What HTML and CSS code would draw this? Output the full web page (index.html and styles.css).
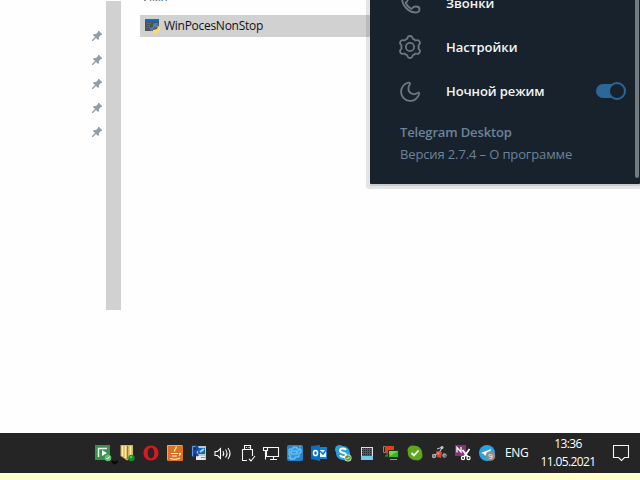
FILE: index.html
```html
<!DOCTYPE html>
<html lang="ru">
<head>
<meta charset="utf-8">
<title>Desktop</title>
<link rel="stylesheet" href="styles.css">
</head>
<body>
<svg width="0" height="0" class="defs"><defs>
<symbol id="pin" viewBox="0 0 12 12"><path d="M7 1h1l3 3v1H10L8 7v2L7 10 5 8 2 11H1v-1l3-3-2-2 1-1h2l2-2z" fill="#929ea8"/></symbol>
<path id="tooth" d="M8.300 5.200Q10.300 5.700 10.600 3.700Q10.900 2 13 2Q15.100 2 15.400 3.700Q15.700 5.700 17.700 5.200"/>
</defs></svg>
<main class="desktop">
  <nav class="pins">
    <svg><use href="#pin"/></svg><svg><use href="#pin"/></svg><svg><use href="#pin"/></svg><svg><use href="#pin"/></svg><svg><use href="#pin"/></svg>
  </nav>
  <div class="scrollbar"></div>
  <section class="files">
    <div class="column-head"><span>Имя</span></div>
    <div class="file">
      <svg width="16" height="16" viewBox="0 0 16 16"><path fill="#505456" d="M0 0h14v12H0z"/><path fill="#0873c4" d="M0 0h14v2H0z"/><path d="M2 4.500h4M2 6.500h3M2 8.500h3" stroke="#438049"/><path d="M8 5l2-1h3v4l-4 1-2 3-2-1V9l3-1z" fill="#4381b7"/><path d="M13 7l2 1v4l-3 1-1 2-3-1v-3l4-1z" fill="#ffdc51"/></svg>
      <span>WinPocesNonStop</span>
    </div>
  </section>
  <aside class="menu">
    <div class="item calls"><svg width="26" height="26" viewBox="0 0 26 26"><path d="M5 8C5 16 12 22.500 19 22.500c2.500 0 3.500-1.500 3.500-3.500 0-1.800-2-2.500-3.500-2.500s-3 .3-3.500 1.500c-.3.800-.8 1-1.500.600-2-1.100-4-3.100-5-5.100-.4-.8-.2-1.300.5-1.600C11 11 11 9 10.500 7S9.500 4 8 4 5 5.500 5 8z"/></svg><span>Звонки</span></div>
    <div class="item"><svg width="26" height="26" viewBox="0 0 26 26"><use href="#tooth"/><use href="#tooth" transform="rotate(60 13 13)"/><use href="#tooth" transform="rotate(120 13 13)"/><use href="#tooth" transform="rotate(180 13 13)"/><use href="#tooth" transform="rotate(240 13 13)"/><use href="#tooth" transform="rotate(300 13 13)"/><circle cx="13" cy="13" r="4.100"/></svg><span>Настройки</span></div>
    <div class="item"><svg width="26" height="26" viewBox="0 0 26 26"><path d="M11.500 4.700a9.200 9.200 0 1 0 10.700 11.200c.2-1.300-.8-1.700-1.700-1-4.700 3-9.600-.2-9-5.400.2-1.600.8-2.300 1.300-3 .7-1 .1-2-1.300-1.800z"/></svg><span class="night">Ночной режим</span><i class="toggle"></i></div>
    <footer><strong>Telegram Desktop</strong><span>Версия 2.7.4 – О программе</span></footer>
    <i class="menu-scroll"></i>
  </aside>
</main>
<div class="taskbar">
  <div class="tray">
    <svg viewBox="0 0 24 24"><path fill="#37914f" d="M4 4h15v15H4z"/><path d="M7.500 16V7.500H16" stroke="#e9f5ea" stroke-width="1.500" fill="none"/><path d="M11 9l5 3-5 3z" fill="#fff"/><circle cx="17" cy="17" r="3.300" fill="#69bd71"/><path d="M15.500 17l1 1 2-2.500" stroke="#fff" fill="none"/><path d="M21 20l2.500 2.500L26.500 20" stroke="#070707" stroke-width="2" fill="none"/></svg>
    <svg viewBox="0 0 24 24"><path fill="#d9b25c" d="M5.500 4H18v11l-6 4.500L5.500 15z"/><path d="M7.500 5v10M10.500 5v12M15.500 5v9" stroke="#fff0ab" stroke-width="1.500"/><path d="M12.500 5v13" stroke="#9b7838"/><circle cx="16.500" cy="17" r="3.200" fill="#158e28"/><circle cx="16" cy="16" r="1.200" fill="#4ad159"/></svg>
    <svg viewBox="0 0 24 24"><path fill-rule="evenodd" fill="#dc1721" d="M12 4.500c4.200 0 7.500 3.200 7.500 7.500s-3.300 7.500-7.500 7.500S4.500 16.300 4.500 12 7.800 4.500 12 4.500zm0 2c-2 0-3.300 2.300-3.300 5.500s1.300 5.500 3.300 5.500 3.300-2.300 3.300-5.500S14 6.500 12 6.500z"/></svg>
    <svg viewBox="0 0 24 24"><rect x="4" y="4" width="16" height="16" rx="1" fill="#de711f"/><path d="M4.500 19V4.500H19" stroke="#f6a15c" fill="none"/><path d="M13 5.500c1.500 2-3 3-1 5M8 12.500h7M9 15h5M7 17.500c3 1 7 1 10-.5M16 12.500c2-1 2 1 0 2" stroke="#fff4dd" fill="none" stroke-width="1.200"/></svg>
    <svg viewBox="0 0 24 24"><path fill="#bfc7ca" d="M9 5h10v14H9z"/><path fill="#1769b5" d="M11 7h7v6h-7z"/><path d="M13 11l4-3" stroke="#91d8f5" stroke-width="2"/><path fill="#e8eced" d="M9 15h9v4H9z"/><path d="M6 16V5.500h3q3 1 0 4.500H7l4 5" fill="none" stroke="#1d43ad" stroke-width="2.500"/><path d="M5.500 15V5.500h3" fill="none" stroke="#5c9de2"/><path d="M14 16.500h4" stroke="#83939c"/></svg>
    <svg viewBox="0 0 24 24" class="line"><path d="M4 10.500h2.500l3-3v10l-3-3H4zM12 10q1.500 2.500 0 5M14.500 8.500q3 4 0 8M17 7q4 5.500 0 11"/></svg>
    <svg viewBox="0 0 24 24" class="line"><path d="M9.500 8V4.500h6V8M8.500 19.500h-1v-11h10V15M8.500 19.500H12M11.500 6v1M14 6v1M14 18l2 2 4-5"/></svg>
    <svg viewBox="0 0 24 24" class="line"><path d="M9 6.500h10.500v9H7.500V10M14.500 15.500v3M11 18.500h7M4.500 6.500h4v3h-4zM6.500 9.500v9"/></svg>
    <svg viewBox="0 0 24 24"><rect x="4" y="4" width="16" height="16" rx="2" fill="#2484cb"/><path d="M6 8h4V6h4v2h4v4h-2v4h-4v2H7v-4H6zM8 10h6v3H8zM14 11l4-3" stroke="#7fcdf4" fill="#2f9bdb"/><path d="M5 17q3-2 5 2M16 6l2-1" stroke="#a9b59b" fill="none"/></svg>
    <svg viewBox="0 0 24 24"><path fill="#1683d2" d="M11 6h9v12h-9z"/><path fill="#eef7ff" d="M13 9h6v7h-6z"/><path d="M13 10l3 3 3-4" stroke="#0873c4" stroke-width="1.500" fill="none"/><path fill="#0670c5" d="M4 5l9-1v16l-9-2z"/><ellipse cx="8.500" cy="12" rx="2" ry="2.600" stroke="#fff" stroke-width="1.500" fill="none"/></svg>
    <svg viewBox="0 0 24 24"><circle cx="8.500" cy="8.500" r="4.500" fill="#23a2df"/><circle cx="15" cy="15" r="4.500" fill="#23a2df"/><circle cx="12" cy="12" r="7" fill="#23a2df"/><path d="M15 9c-1-2-6-2-6 .5 0 3 6 1.500 6 4.500 0 2.500-5 2.500-6 .2" fill="none" stroke="#fff" stroke-width="2"/><circle cx="17" cy="17" r="3.500" fill="#e9f4df"/><circle cx="17" cy="17" r="2.800" fill="#579b2d"/><path d="M15.500 17l1 1 2-2" stroke="#fff" fill="none"/></svg>
    <svg viewBox="0 0 24 24"><path fill="#dce2e4" d="M6 6h12v13H6z"/><path fill="#535b60" d="M7 7h10v8H7z"/><path d="M7 7.500h10M7 9.500h10M7 11.500h10M7 13.500h10" stroke="#1d2328" stroke-dasharray="1 1"/><path fill="#76c8ef" d="M6 15h12v4H6z"/></svg>
    <svg viewBox="0 0 24 24"><path fill="#222" stroke="#888" d="M4.500 5.500h7v6h-7z"/><path fill="#e43e1c" d="M6 5h9v7H6z"/><path d="M6 15h5M8 12v3" stroke="#777"/><path fill="#34b72b" stroke="#153d18" d="M9.500 9.500h10v7h-10z"/><path d="M10 10h9l-8 5z" fill="#75d946"/><path d="M11 18.500h7" stroke="#999"/></svg>
    <svg viewBox="0 0 24 24"><circle cx="9.500" cy="9.500" r="5" fill="#5fa61d"/><circle cx="14.500" cy="14.500" r="5" fill="#5fa61d"/><circle cx="12" cy="12" r="7.200" fill="#5fa61d"/><path d="M8.500 12l2.500 2.500 4.500-5" fill="none" stroke="#fff" stroke-width="1.800"/></svg>
    <svg viewBox="0 0 24 24"><path d="M10 8l6-2M12 12l3-5M7 15l4-3M16 13l3 2" stroke="#b9bdbd" stroke-width="1.200"/><circle cx="15" cy="6.500" r="1.500" fill="#c4c7c7"/><circle cx="7" cy="15" r="2.200" fill="#aeb2b2"/><circle cx="17.500" cy="14.500" r="2.200" fill="#999e9e"/><path d="M9 10l6 1-1 6-4-1z" fill="#d84736"/><path d="M10 11l3 1-2 2z" fill="#ff8e7b"/><path d="M6 15h2M17 15h2" stroke="#444"/></svg>
    <svg viewBox="0 0 24 24"><path fill="#81347d" d="M4 4h11v11H4z"/><path d="M6 11.500V6.500l4 4.500V6" fill="none" stroke="#fff" stroke-width="1.300"/><path d="M11.500 9l5.500 7M18.500 8l-5.500 8" stroke="#fff" stroke-width="1.800"/><g fill="none" stroke="#fff" stroke-width="1.200"><circle cx="12" cy="17" r="1.600"/><circle cx="17.500" cy="17" r="1.600"/></g></svg>
    <svg viewBox="0 0 24 24"><circle cx="12" cy="12" r="8" fill="#2ba3df"/><path fill="#fff" d="M6 12l10-4-2 7-3-1-1 1-1-2z"/><circle cx="15.500" cy="15" r="4.800" fill="#8c8c8c"/><text x="13.300" y="18" font-size="8" fill="#fff">9</text></svg>
  </div>
  <span class="lang">ENG</span>
  <div class="clock"><span>13:36</span><span>11.05.2021</span></div>
  <svg class="notice line" width="20" height="20" viewBox="0 0 20 20"><path d="M3.500 2.500h15v12h-4l-3 3-3-3h-5z"/></svg>
</div>
</body>
</html>
```
FILE: styles.css
```css
*, *::before, *::after { box-sizing: border-box; }
body { margin: 0; width: 640px; height: 480px; overflow: hidden; background: #ffffcc; font: 12px/16px "Open Sans", "Noto Sans", sans-serif; }
.defs { position: absolute; }
.desktop { display: flex; align-items: flex-start; height: 433px; background: #fefefe; }
.pins { width: 106px; padding: 30px 3px 0 0; display: flex; flex-direction: column; align-items: flex-end; gap: 12px; }
.pins svg { width: 12px; height: 12px; }
.scrollbar { width: 15px; height: 309px; margin-top: 1px; background: #d1d1d1; }
.files { width: 249px; padding-left: 19px; }
.column-head { display: flow-root; height: 15px; padding-left: 3px; color: #4c607a; }
.column-head span { display: block; margin-top: -12px; }
.file { display: flex; height: 22px; padding-left: 5px; align-items: center; gap: 3px; background: #d1d1d1; color: #111; }
.file svg { margin-top: 2px; }
.file span { letter-spacing: -.28px; }
.menu { position: relative; width: 270px; height: 184px; background: #18222d; color: #f3f5f6; border-radius: 0 0 1px 1px; box-shadow: 0 2px 0 0 rgba(0,0,0,.1), 0 1px 0 4px rgba(0,0,0,.1); }
.item { display: flex; align-items: center; height: 44px; padding-left: 27px; gap: 23px; font-weight: 600; font-size: 13px; white-space: nowrap; }
.item.calls { margin-top: -19px; }
.item svg { flex: none; fill: none; stroke: #6c7883; stroke-width: 1.8; stroke-linejoin: round; }
.night { width: 127px; letter-spacing: -.1px; }
.toggle { width: 30px; height: 18px; border-radius: 9px; display: flex; align-items: center; justify-content: flex-end; }
.toggle::before { content: ""; flex: none; width: 22px; height: 14px; margin-right: -10px; border-radius: 7px; background: #2b6797; }
.toggle::after { content: ""; flex: none; width: 18px; height: 18px; border: 2px solid #2b6797; border-radius: 50%; background: #18222d; }
.column-head span { margin-top: -11px; }
.menu footer { display: flex; flex-direction: column; padding: 11px 0 0 30px; gap: 6px; font-size: 13px; color: #6c8398; }
.menu strong { font-weight: 600; letter-spacing: -.15px; }
.menu footer span { letter-spacing: -.13px; }
.menu-scroll { position: absolute; right: 1px; top: -5px; width: 4px; height: 183px; border-radius: 2px; background: #717981; }
.taskbar { display: flex; align-items: center; height: 40px; padding-left: 91px; background: #252525; color: #fff; }
.tray { display: flex; width: 408px; }
.tray svg { width: 24px; height: 24px; overflow: visible; }
.line { fill: none; stroke: #f5f5f5; stroke-width: 1.1; }
.lang { width: 36px; padding-left: 6px; letter-spacing: -.4px; }
.clock { width: 66px; display: flex; flex-direction: column; align-items: center; gap: 2px; letter-spacing: -.6px; }
.notice { margin-left: 9px; }
```
